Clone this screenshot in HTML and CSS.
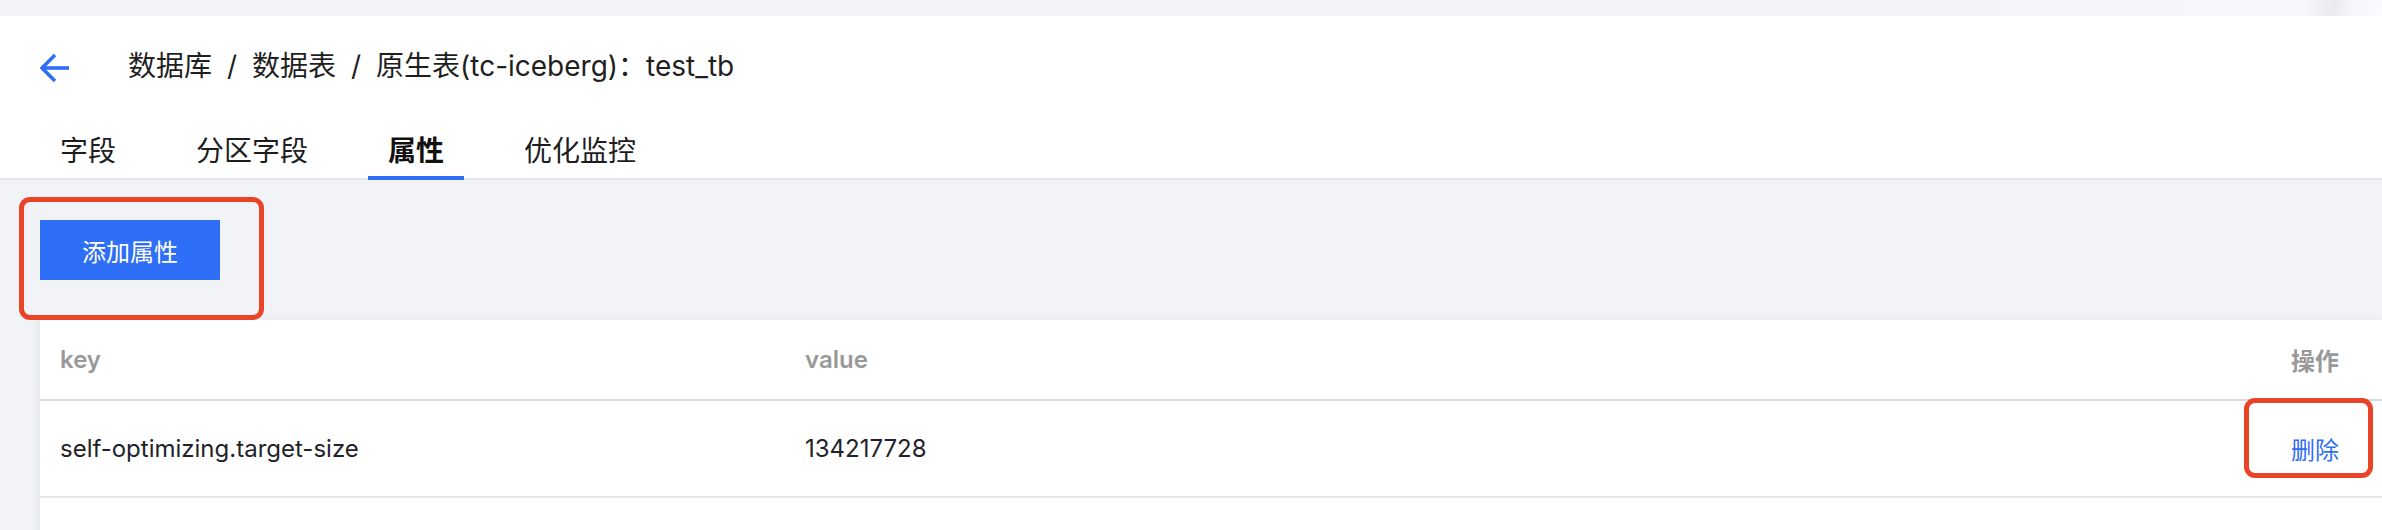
FILE: index.html
```html
<!DOCTYPE html>
<html lang="zh-CN">
<head>
<meta charset="utf-8">
<title>属性</title>
<link rel="stylesheet" href="styles.css">
</head>
<body>
<div class="page">
  <div class="topbar"></div>
  <header class="detail-header">
    <div class="crumb-row">
      <span class="back" aria-label="返回">
        <svg viewBox="0 0 30 30" width="30" height="30">
          <path d="M2 15H29" fill="none" stroke="#2f6ef6" stroke-width="3.6"/>
          <path d="M15 2L2 15L15 28" fill="none" stroke="#2f6ef6" stroke-width="3.6" stroke-linejoin="miter"/>
        </svg>
      </span>
      <nav class="breadcrumb">
        <span class="crumb">数据库</span>
        <span class="sep">/</span>
        <span class="crumb">数据表</span>
        <span class="sep">/</span>
        <span class="crumb">原生表(tc-iceberg)：test_tb</span>
      </nav>
    </div>
    <div class="tabs">
      <div class="tab">字段</div>
      <div class="tab">分区字段</div>
      <div class="tab active">属性</div>
      <div class="tab">优化监控</div>
    </div>
  </header>
  <main class="content">
    <div class="toolbar">
      <button class="btn-primary">添加属性</button>
    </div>
    <div class="table-card">
      <table class="prop-table">
        <colgroup>
          <col class="c-key">
          <col class="c-value">
          <col class="c-action">
        </colgroup>
        <thead>
          <tr>
            <th>key</th>
            <th>value</th>
            <th class="col-action">操作</th>
          </tr>
        </thead>
        <tbody>
          <tr>
            <td>self-optimizing.target-size</td>
            <td>134217728</td>
            <td class="col-action"><a class="link">删除</a></td>
          </tr>
        </tbody>
      </table>
    </div>
  </main>
  <div class="annot annot-add"></div>
  <div class="annot annot-del"></div>
</div>
</body>
</html>
```

FILE: styles.css
```css
* { box-sizing: border-box; }

html, body {
  margin: 0;
  padding: 0;
}

body {
  background: #f2f3f7;
  font-family: "Inter", "Noto Sans CJK SC", sans-serif;
  color: #1f2329;
  overflow: hidden;
  width: 2382px;
  height: 530px;
}

.page {
  position: relative;
  min-height: 530px;
}

.topbar {
  height: 16px;
  background: linear-gradient(100deg,
    #f2f3f6 0,
    #f3f4f7 1900px,
    #f6f7fa 2270px,
    #e9eaee 2300px,
    #f6f7fa 2318px,
    #f8f9fc 2330px,
    #fbfcfe 2350px,
    #eceef1 2372px,
    #f8f9fc 2382px);
}

.detail-header {
  background: #fff;
  padding: 30px 0 0 40px;
  border-bottom: 2px solid #e6e7ec;
}

.crumb-row {
  display: flex;
  align-items: center;
  height: 40px;
}

.back {
  display: inline-flex;
  width: 30px;
  height: 30px;
  margin-top: 4px;
  margin-right: 58px;
}

.breadcrumb {
  display: flex;
  align-items: center;
  font-size: 28px;
  line-height: 40px;
  color: #1f1f1f;
}

.sep {
  display: inline-block;
  width: 40px;
  text-align: center;
  color: #1f1f1f;
}

.tabs {
  display: flex;
  gap: 40px;
  margin-top: 38px;
}

.tab {
  position: relative;
  padding: 0 20px;
  height: 54px;
  line-height: 54px;
  font-size: 28px;
  color: #1d1d1f;
}

.tab.active {
  font-weight: 600;
  color: #111;
}

.tab.active::after {
  content: "";
  position: absolute;
  left: 0;
  right: 0;
  bottom: -2px;
  height: 4px;
  background: #2f6ef6;
}

.content {
  padding: 40px 0 0 40px;
}

.toolbar {
  display: flex;
  margin-bottom: 40px;
}

.btn-primary {
  width: 180px;
  height: 60px;
  border: none;
  border-radius: 0;
  background: #2f6ef6;
  color: #fff;
  font-family: "Inter", "Noto Sans CJK SC", sans-serif;
  font-size: 24px;
  padding: 0;
}

.table-card {
  background: #fff;
  box-shadow: -3px 0 8px rgba(0, 0, 0, 0.06);
  padding-bottom: 40px;
}

.prop-table {
  width: 100%;
  border-collapse: collapse;
  table-layout: fixed;
  font-size: 24px;
}

.c-key { width: 745px; }
.c-action { width: 240px; }

.prop-table th {
  height: 80px;
  padding: 0 20px;
  text-align: left;
  font-weight: 600;
  color: #999;
  border-bottom: 2px solid #d5d9e0;
}

.prop-table td {
  height: 97px;
  padding: 0 20px;
  color: #1f2329;
  border-bottom: 2px solid #e6e7eb;
}

.prop-table .col-action {
  text-align: right;
  padding-right: 43px;
}

.link {
  color: #2f6ef6;
  cursor: pointer;
}

.annot {
  position: absolute;
  border: 5px solid #e94427;
  border-radius: 11px;
  pointer-events: none;
}

.annot-add {
  left: 19px;
  top: 197px;
  width: 245px;
  height: 123px;
}

.annot-del {
  left: 2244px;
  top: 398px;
  width: 129px;
  height: 80px;
}
```
